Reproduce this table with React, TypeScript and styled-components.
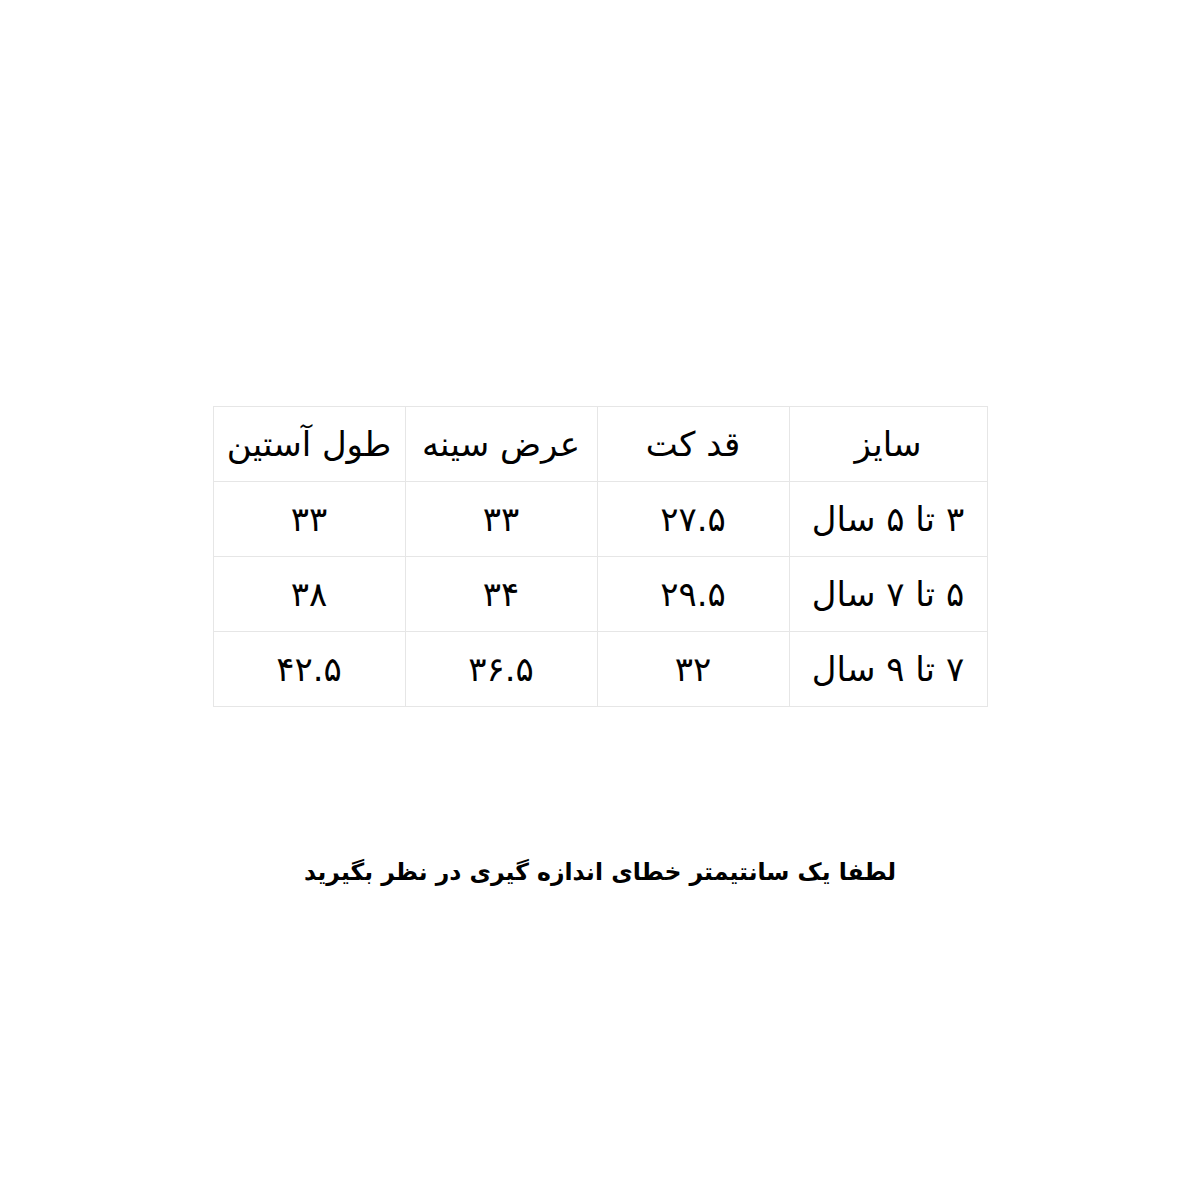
import styled, { createGlobalStyle } from 'styled-components';

const GlobalStyle = createGlobalStyle`
  body {
    margin: 0;
    background: #ffffff;
    font-family: "DejaVu Sans", "Noto Sans", sans-serif;
  }
`;

const Page = styled.div`
  width: 1200px;
  height: 1200px;
  display: flex;
  flex-direction: column;
  align-items: center;
  padding-top: 406px;
  box-sizing: border-box;
  direction: rtl;
`;

const SizeTable = styled.table`
  border-collapse: collapse;
  width: 775px;
  table-layout: fixed;
`;

const Col = styled.col<{ $width: number }>`
  width: ${props => props.$width}px;
`;

const Cell = styled.td`
  border: 1px solid #e6e6e6;
  height: 74px;
  padding: 0;
  text-align: center;
  vertical-align: middle;
  font-size: 34px;
  color: #000;
`;

const Note = styled.p`
  margin: 151px 0 0;
  font-size: 23.5px;
  font-weight: bold;
  color: #000;
`;

const colWidths = [198, 192, 192, 192];

const rows = [
  ['سایز', 'قد کت', 'عرض سینه', 'طول آستین'],
  ['۳ تا ۵ سال', '۲۷.۵', '۳۳', '۳۳'],
  ['۵ تا ۷ سال', '۲۹.۵', '۳۴', '۳۸'],
  ['۷ تا ۹ سال', '۳۲', '۳۶.۵', '۴۲.۵'],
];

const App = () => {
  return (
    <>
      <GlobalStyle />
      <Page>
        <SizeTable>
          <colgroup>
            {colWidths.map((w, i) => (
              <Col key={i} $width={w} />
            ))}
          </colgroup>
          <tbody>
            {rows.map((row, i) => (
              <tr key={i}>
                {row.map((text, j) => (
                  <Cell key={j}>{text}</Cell>
                ))}
              </tr>
            ))}
          </tbody>
        </SizeTable>
        <Note>لطفا یک سانتیمتر خطای اندازه گیری در نظر بگیرید</Note>
      </Page>
    </>
  );
};

export default App;
